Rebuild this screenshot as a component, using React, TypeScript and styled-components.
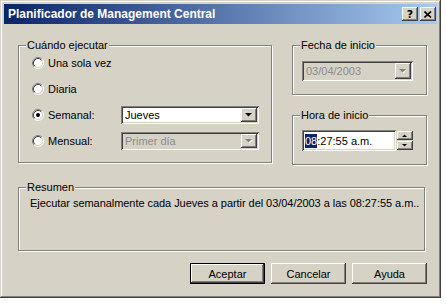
import styled, { createGlobalStyle } from "styled-components";

const FACE = "#d6d2c6";
const NAVY = "#0a246a";

const GlobalStyle = createGlobalStyle`
  html, body {
    margin: 0;
    padding: 0;
    background: #fff;
  }
  body {
    font-family: "Liberation Sans", Arial, sans-serif;
    font-size: 11px;
    color: #000;
  }
`;

const raised = `
  box-shadow: inset -1px -1px 0 #404040, inset 1px 1px 0 #fff,
    inset -2px -2px 0 #808080, inset 2px 2px 0 ${FACE};
`;

const sunken = `
  box-shadow: inset 1px 1px 0 #808080, inset -1px -1px 0 #fff,
    inset 2px 2px 0 #404040, inset -2px -2px 0 ${FACE};
`;

const Window = styled.div`
  width: 441px;
  height: 298px;
  box-sizing: border-box;
  padding: 4px;
  background: ${FACE};
  box-shadow: inset -1px -1px 0 #404040, inset 1px 1px 0 ${FACE},
    inset -2px -2px 0 #808080, inset 2px 2px 0 #fff;
  display: flex;
  flex-direction: column;
`;

const TitleBar = styled.div`
  height: 20px;
  display: flex;
  align-items: center;
  padding: 0 1px 0 4px;
  background: linear-gradient(to right, ${NAVY}, #a6caf0);
  color: #fff;
  font-weight: bold;
  font-size: 12px;
`;

const TitleText = styled.span`
  flex: 1;
  white-space: nowrap;
`;

const CaptionButtons = styled.div`
  display: flex;
  gap: 2px;
`;

const CaptionButton = styled.div`
  width: 16px;
  height: 14px;
  background: ${FACE};
  ${raised}
  display: flex;
  align-items: center;
  justify-content: center;
  color: #000;
  font-family: "DejaVu Sans", sans-serif;
  font-size: 11px;
  font-weight: bold;
  line-height: 1;
`;

const Body = styled.div`
  flex: 1;
  display: flex;
  flex-direction: column;
  align-items: flex-start;
  padding: 21px 10px 0 14px;
`;

const TopRow = styled.div`
  display: flex;
  gap: 20px;
  align-items: flex-start;
`;

const Group = styled.div<{ $w: number; $pad: string; $h?: number; $mt?: number }>`
  position: relative;
  box-sizing: border-box;
  width: ${(p) => p.$w}px;
  ${(p) => (p.$h ? `height: ${p.$h}px;` : "")}
  margin-top: ${(p) => p.$mt ?? 0}px;
  padding: ${(p) => p.$pad};
  border: 1px solid #808080;
  box-shadow: inset 1px 1px 0 #fff, 1px 1px 0 #fff;
`;

const Caption = styled.span`
  position: absolute;
  top: -7px;
  left: 7px;
  padding: 0 1px;
  line-height: 13px;
  background: ${FACE};
  white-space: nowrap;
`;

const ScheduleGrid = styled.div`
  display: grid;
  grid-template-columns: 89px 138px;
  grid-auto-rows: 18px;
  row-gap: 8px;
  align-items: center;
`;

const Option = styled.label`
  grid-column: 1;
  display: flex;
  align-items: center;
  gap: 4px;
  line-height: 13px;
`;

const RightColumn = styled.div`
  display: flex;
  flex-direction: column;
  gap: 20px;
`;

const Combo = styled.div<{ $w: number; $h: number; $disabled?: boolean }>`
  display: flex;
  box-sizing: border-box;
  width: ${(p) => p.$w}px;
  height: ${(p) => p.$h}px;
  padding: 2px;
  background: ${(p) => (p.$disabled ? FACE : "#fff")};
  ${sunken}
`;

const ComboText = styled.span<{ $disabled?: boolean }>`
  flex: 1;
  display: flex;
  align-items: center;
  padding-left: 2px;
  color: ${(p) => (p.$disabled ? "#8c8c8c" : "#000")};
  white-space: nowrap;
`;

const DropButton = styled.div`
  width: 16px;
  background: ${FACE};
  ${raised}
  display: flex;
  align-items: center;
  justify-content: center;
`;

const TimeRow = styled.div`
  display: flex;
  align-items: center;
  gap: 1px;
`;

const TimeField = styled.div`
  box-sizing: border-box;
  width: 94px;
  height: 21px;
  padding: 2px 2px 2px 3px;
  display: flex;
  align-items: center;
  background: #fff;
  ${sunken}
`;

const Selected = styled.span`
  background: ${NAVY};
  color: #fff;
  padding: 1px 0;
`;

const Spinner = styled.div`
  display: flex;
  flex-direction: column;
  gap: 1px;
`;

const SpinButton = styled.div`
  width: 16px;
  height: 9px;
  background: ${FACE};
  ${raised}
  display: flex;
  align-items: center;
  justify-content: center;
`;

const Summary = styled.div`
  line-height: 13px;
  white-space: nowrap;
  letter-spacing: -0.05px;
`;

const ButtonRow = styled.div`
  align-self: stretch;
  display: flex;
  justify-content: flex-end;
  gap: 6px;
  margin-top: 12px;
`;

const PushButton = styled.div<{ $default?: boolean }>`
  box-sizing: border-box;
  width: 75px;
  height: 21px;
  display: flex;
  align-items: center;
  justify-content: center;
  background: ${FACE};
  ${(p) =>
    p.$default
      ? `border: 1px solid #000;
         box-shadow: inset -1px -1px 0 #404040, inset 1px 1px 0 #fff,
           inset -2px -2px 0 #808080;`
      : raised}
`;

const Radio = ({ checked }: { checked?: boolean }) => (
  <svg width="12" height="12" viewBox="0 0 12 12">
    <circle cx="6" cy="6" r="4.5" fill="#fff" />
    <path d="M2.11 9.89 A5.5 5.5 0 0 1 9.89 2.11" fill="none" stroke="#808080" />
    <path d="M9.89 2.11 A5.5 5.5 0 0 1 2.11 9.89" fill="none" stroke="#fff" />
    <path d="M2.82 9.18 A4.5 4.5 0 0 1 9.18 2.82" fill="none" stroke="#404040" />
    <path d="M9.18 2.82 A4.5 4.5 0 0 1 2.82 9.18" fill="none" stroke={FACE} />
    {checked && <circle cx="6" cy="6" r="2" fill="#000" />}
  </svg>
);

const Arrow = ({ disabled, small }: { disabled?: boolean; small?: boolean }) => {
  const pts = small ? "0,0 5,0 2.5,2.5" : "0,0 7,0 3.5,3.5";
  const w = small ? 6 : 8;
  const h = small ? 4 : 5;
  return (
    <svg width={w} height={h} viewBox={`0 0 ${w} ${h}`}>
      {disabled && <polygon points={pts} fill="#fff" transform="translate(1,1)" />}
      <polygon points={pts} fill={disabled ? "#808080" : "#000"} />
    </svg>
  );
};

const UpArrow = () => (
  <svg width="6" height="4" viewBox="0 0 6 4">
    <polygon points="0,3 5,3 2.5,0.5" fill="#000" />
  </svg>
);

const App = () => (
  <>
    <GlobalStyle />
    <Window>
      <TitleBar>
        <TitleText>Planificador de Management Central</TitleText>
        <CaptionButtons>
          <CaptionButton>?</CaptionButton>
          <CaptionButton>
            <svg width="8" height="7" viewBox="0 0 8 7">
              <path d="M0.5 0.5 L7 6.5 M7 0.5 L0.5 6.5" stroke="#000" strokeWidth="1.6" />
            </svg>
          </CaptionButton>
        </CaptionButtons>
      </TitleBar>

      <Body>
        <TopRow>
          <Group $w={254} $pad="8px 12px 12px 13px">
            <Caption>Cuándo ejecutar</Caption>
            <ScheduleGrid>
              <Option>
                <Radio />
                Una sola vez
              </Option>
              <Option>
                <Radio />
                Diaria
              </Option>
              <Option>
                <Radio checked />
                Semanal:
              </Option>
              <Combo $w={138} $h={18}>
                <ComboText>Jueves</ComboText>
                <DropButton>
                  <Arrow />
                </DropButton>
              </Combo>
              <Option>
                <Radio />
                Mensual:
              </Option>
              <Combo $w={138} $h={18} $disabled>
                <ComboText $disabled>Primer día</ComboText>
                <DropButton>
                  <Arrow disabled />
                </DropButton>
              </Combo>
            </ScheduleGrid>
          </Group>

          <RightColumn>
            <Group $w={135} $pad="15px 13px 13px 9px">
              <Caption>Fecha de inicio</Caption>
              <Combo $w={111} $h={20} $disabled>
                <ComboText $disabled>03/04/2003</ComboText>
                <DropButton>
                  <Arrow disabled />
                </DropButton>
              </Combo>
            </Group>
            <Group $w={135} $pad="14px 13px 13px 9px">
              <Caption>Hora de inicio</Caption>
              <TimeRow>
                <TimeField>
                  <Selected>08</Selected>:27:55 a.m.
                </TimeField>
                <Spinner>
                  <SpinButton>
                    <UpArrow />
                  </SpinButton>
                  <SpinButton>
                    <Arrow small />
                  </SpinButton>
                </Spinner>
              </TimeRow>
            </Group>
          </RightColumn>
        </TopRow>

        <Group $w={407} $h={64} $mt={22} $pad="9px 11px">
          <Caption>Resumen</Caption>
          <Summary>
            Ejecutar semanalmente cada Jueves a partir del 03/04/2003 a las 08:27:55 a.m..
          </Summary>
        </Group>

        <ButtonRow>
          <PushButton $default>Aceptar</PushButton>
          <PushButton>Cancelar</PushButton>
          <PushButton>Ayuda</PushButton>
        </ButtonRow>
      </Body>
    </Window>
  </>
);

export default App;
